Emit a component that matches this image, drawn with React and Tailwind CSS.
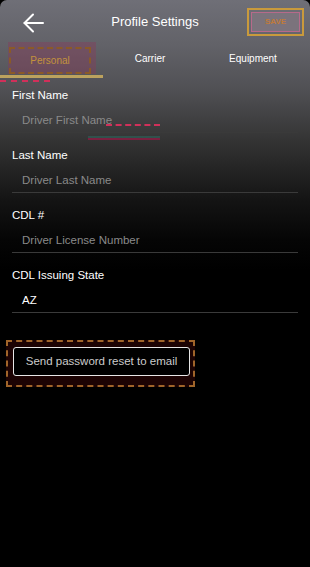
import React from 'react';

const fields = [
    { label: 'First Name', value: 'Driver First Name', filled: false },
    { label: 'Last Name', value: 'Driver Last Name', filled: false },
    { label: 'CDL #', value: 'Driver License Number', filled: false },
    { label: 'CDL Issuing State', value: 'AZ', filled: true },
];

const BackArrow = () => (
    <svg width="22" height="20" viewBox="0 0 22 20" fill="none" stroke="white" strokeWidth="2" strokeLinecap="round" strokeLinejoin="round">
        <path d="M10 1.5L1.5 10L10 18.5" />
        <path d="M1.5 10H20" />
    </svg>
);

const App = () => {
    return (
        <div
            className="relative w-[310px] h-[567px] overflow-hidden bg-black text-white"
            style={{ fontFamily: '"Liberation Sans", Arial, sans-serif' }}
        >
            <div className="rounded-t-[7px] bg-[linear-gradient(to_bottom,#6f6f77_0px,#626268_45px,#505054_90px,#343434_140px,#141414_200px,#050505_240px,#000_270px)] pb-[6px]">
                {/* header */}
                <div className="h-[42px] grid grid-cols-[1fr_auto_1fr] items-center">
                    <div className="pl-[23px] pt-[3px]">
                        <BackArrow />
                    </div>
                    <h1 className="text-[13px] leading-[16px] pt-[2px]">Profile Settings</h1>
                    <div className="flex justify-end pr-[6px] pt-[2px]">
                        <div className="w-[57px] h-[28px] border-2 border-[#c99a3c] p-[2px]">
                            <div className="h-full border border-[#b76a8a] bg-[#7b737c] flex items-center justify-center">
                                <span className="text-[8px] font-bold text-[#c07a3a]">SAVE</span>
                            </div>
                        </div>
                    </div>
                </div>

                {/* tabs */}
                <div className="flex h-[33px] items-center">
                    <div className="w-[100px] flex h-full items-end pl-[8px] pb-[1px]">
                        <div className="w-[88px] h-[32px] bg-[#8a3a5a]/40 flex items-end">
                            <div className="w-[82px] h-[27px] ml-[1px] border-2 border-dashed border-[#8a5a28] flex items-center justify-center text-[10px] text-[#c3923d]">
                                Personal
                            </div>
                        </div>
                    </div>
                    <div className="w-[100px] text-center text-[10px]">Carrier</div>
                    <div className="w-[106px] text-center text-[10px]">Equipment</div>
                </div>
                <div className="h-[3px] w-[103px] bg-[#bca25e]"></div>

                {/* form */}
                <div className="relative px-[12px]">
                    {fields.map((f, i) => (
                        <div
                            key={f.label}
                            className={`border-b border-[#3a3a3a] pb-[5px] ${i === 0 ? 'pt-[10px]' : 'pt-[15px]'}`}
                        >
                            <div className="text-[11.5px] leading-[14px]">{f.label}</div>
                            <div
                                className={`mt-[11px] pl-[10px] text-[11.5px] leading-[14px] ${f.filled ? 'text-white' : 'text-[#8a8a8a]'}`}
                            >
                                {f.value}
                            </div>
                        </div>
                    ))}

                    {/* stray highlight marks */}
                    <div className="absolute left-[0px] top-[2px] w-[50px] border-t-2 border-dashed border-[#d0305a] pointer-events-none"></div>
                    <div className="absolute left-[106px] top-[46px] w-[54px] border-t-2 border-dashed border-[#d0305a] pointer-events-none"></div>
                    <div className="absolute left-[88px] top-[58px] w-[72px] h-[4px] bg-[#2d5e56]/70 border-b-2 border-[#7a2040] pointer-events-none"></div>
                </div>
            </div>

            {/* reset button */}
            <div className="mt-[21px] ml-[6px] w-[189px] h-[47px] border-2 border-dashed border-[#a0652a] bg-[#1c0303] flex items-start pt-[5px] pl-[5px]">
                <button className="w-[177px] h-[29px] border-[1.5px] border-[#e6e6e6] rounded-[3px] bg-black text-[11.5px] text-[#cccccc]">
                    Send password reset to email
                </button>
            </div>
        </div>
    );
};

export default App;
